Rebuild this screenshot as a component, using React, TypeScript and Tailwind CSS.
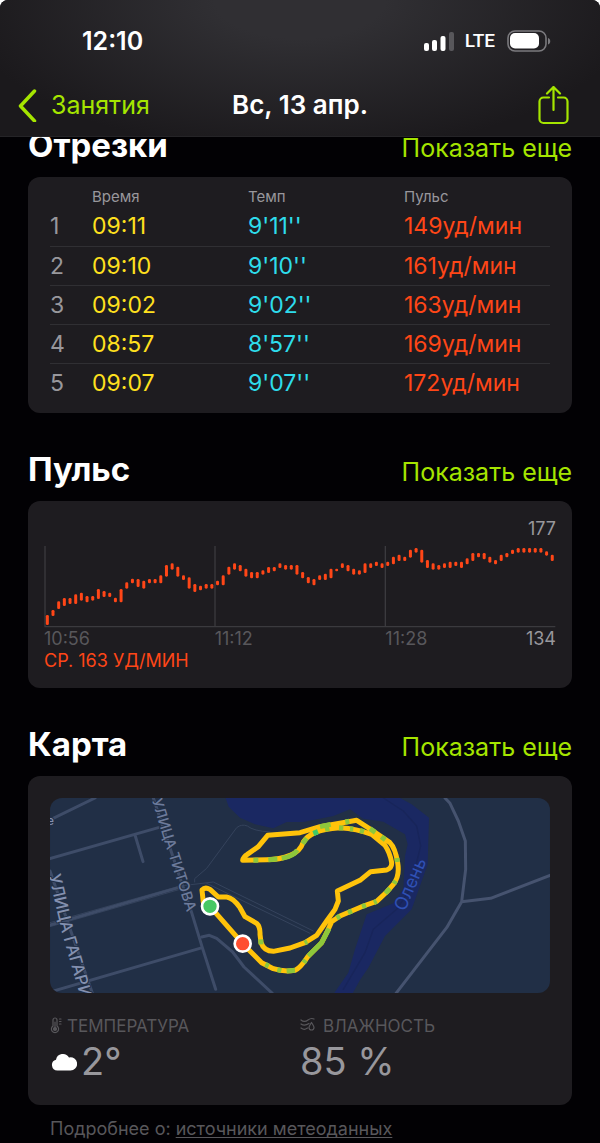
import type { ReactNode } from "react";

const splits = [
  { id: 1, time: "09:11", pace: "9'11''", pulse: 149 },
  { id: 2, time: "09:10", pace: "9'10''", pulse: 161 },
  { id: 3, time: "09:02", pace: "9'02''", pulse: 163 },
  { id: 4, time: "08:57", pace: "8'57''", pulse: 169 },
  { id: 5, time: "09:07", pace: "9'07''", pulse: 172 },
];

// [top, bottom] of every bar, in chart units
const pulseBars = [
  [345, 375], [330, 348], [304, 327], [294, 318], [294, 312], [283, 312],
  [278, 302], [288, 307], [288, 302], [267, 297], [273, 291], [278, 291],
  [293, 307], [267, 307], [247, 266], [236, 250], [237, 261], [242, 266],
  [237, 250], [237, 250], [226, 250], [195, 230], [190, 209], [200, 230],
  [226, 240], [232, 266], [252, 276], [257, 271], [252, 266], [252, 266],
  [242, 256], [226, 256], [200, 224], [190, 209], [195, 214], [206, 230],
  [216, 235], [216, 235], [211, 224], [201, 219], [201, 214], [190, 204],
  [195, 209], [195, 209], [195, 224], [216, 235], [231, 250], [237, 256],
  [226, 240], [221, 240], [206, 235], [206, 214], [190, 204], [195, 214],
  [206, 224], [211, 224], [190, 219], [190, 204], [185, 198], [190, 204],
  [185, 198], [170, 193], [164, 183], [170, 183], [149, 173], [144, 158],
  [149, 188], [180, 204], [190, 209], [195, 209], [190, 204], [185, 204],
  [185, 198], [185, 204], [175, 193], [159, 183], [159, 172], [159, 178],
  [170, 188], [180, 193], [164, 183], [159, 172], [149, 162], [144, 158],
  [144, 158], [144, 158], [144, 158], [144, 158], [154, 167], [164, 183],
];

function StatusBar() {
  return (
    <div className="flex h-[82px] items-center justify-between pl-[82px] pr-[49px]">
      <span className="text-[25px] font-semibold leading-8">12:10</span>
      <div className="flex items-center">
        <svg className="h-5 w-[31px]" viewBox="0 0 31 20" fill="#fff">
          <rect x="0" y="12" width="5" height="8" rx="2" />
          <rect x="8" y="9" width="5" height="11" rx="2" />
          <rect x="16.500" y="5" width="5" height="15" rx="2" />
          <rect x="25" y="1" width="5" height="19" rx="2" fill="#58575b" />
        </svg>
        <span className="ml-2.5 font-[Roboto,sans-serif] text-[19px] font-medium leading-6">LTE</span>
        <svg className="ml-3 h-[22px] w-11" viewBox="0 0 44 22">
          <rect x="1" y="1" width="38" height="20" rx="7" fill="none" stroke="#7b7a7e" strokeWidth="1.6" />
          <rect x="3" y="3" width="29" height="15.500" rx="5" fill="#fff" />
          <path d="M41 8c3 1 3 5.500 0 6.500z" fill="#7b7a7e" />
        </svg>
      </div>
    </div>
  );
}

function NavBar() {
  return (
    <nav className="grid h-[54px] grid-cols-[1fr_auto_1fr] items-start px-[18px] pt-1">
      <a href="#workouts" className="flex items-center gap-3.5 text-[#a5e500]">
        <svg className="h-[34px] w-[19px]" viewBox="0 0 19 34" fill="none" stroke="currentColor" strokeWidth="3.500" strokeLinecap="round" strokeLinejoin="round">
          <path d="M16.500 3 2.500 18l14 15" />
        </svg>
        <span className="text-[25px] leading-[38px]">Занятия</span>
      </a>
      <h1 className="text-[26px] font-semibold leading-[38px]">Вс, 13 апр.</h1>
      <button type="button" aria-label="Поделиться" className="mr-[13px] justify-self-end text-[#a5e500]">
        <svg className="h-10 w-[31px]" viewBox="0 0 31 40" fill="none" stroke="currentColor" strokeWidth="2.200" strokeLinecap="round" strokeLinejoin="round">
          <path d="M11 11.500H5.500a4 4 0 0 0-4 4V33a4 4 0 0 0 4 4h20a4 4 0 0 0 4-4V15.500a4 4 0 0 0-4-4H20M15.500 24V1M9 7.500 15.500 1 22 7.500" />
        </svg>
      </button>
    </nav>
  );
}

function Section({ title, children }: { title: string; children: ReactNode }) {
  return (
    <section>
      <div className="flex h-16 items-baseline justify-between pt-3">
        <h2 className="text-[33px] font-bold leading-10">{title}</h2>
        <a href="#more" className="text-[25px] leading-8 text-[#a5e500]">
          Показать еще
        </a>
      </div>
      <div className="rounded-xl bg-[#1e1c20]">{children}</div>
    </section>
  );
}

function SplitsTable() {
  return (
    <div className="px-[22px] pb-[11px] pt-2.5">
      <table className="w-full table-fixed text-left">
        <thead>
          <tr className="h-5 text-[15px] leading-5 text-[#98979c]">
            <th className="w-[42px] p-0" aria-label="Номер"></th>
            <th className="w-[156px] p-0 font-normal">Время</th>
            <th className="w-[156px] p-0 font-normal">Темп</th>
            <th className="p-0 font-normal">Пульс</th>
          </tr>
        </thead>
        <tbody className="divide-y divide-[#302f33]">
          {splits.map((split) => (
            <tr key={split.id} className="h-[39px] text-[23px] leading-8">
              <td className="p-0 text-[#98979c]">{split.id}</td>
              <td className="p-0 text-[#ffe01e]">{split.time}</td>
              <td className="p-0 text-[#2edcec]">{split.pace}</td>
              <td className="p-0 text-[#ff4617]">{split.pulse}уд/мин</td>
            </tr>
          ))}
        </tbody>
      </table>
    </div>
  );
}

function PulseChart() {
  return (
    <div className="px-4 pb-4 pt-4">
      <p className="text-right text-lg leading-6 text-[#98979c]">177</p>
      <svg className="mt-1 block w-full" viewBox="72 135 1536 249">
        <path d="M75 138V380H1606M585 138V380M1096 138V380" fill="none" stroke="#3b3a3e" strokeWidth="4" />
        {pulseBars.map(([top, bottom], i) => (
          <rect key={i} x={77.5 + i * 17.02} y={top} width="9" height={bottom - top} rx="4" fill="#ff4617" />
        ))}
      </svg>
      <div className="grid grid-cols-3 text-lg leading-[22px] text-[#58575b]">
        <span>10:56</span>
        <span>11:12</span>
        <span className="flex justify-between">
          11:28 <span className="text-[#98979c]">134</span>
        </span>
      </div>
      <p className="text-lg leading-[22px] text-[#ff4617]">СР. 163 УД/МИН</p>
    </div>
  );
}

function RouteMap() {
  return (
    <svg
      className="block w-full rounded-xl"
      viewBox="30 26 1500 586"
      fill="none"
      strokeLinecap="round"
      strokeLinejoin="round"
      fontFamily="Inter, sans-serif"
    >
      <rect x="30" y="26" width="1500" height="586" fill="#212f46" />

      {/* River */}
      <path
        d="M557 26 566 52 600 85 645 105 700 117 740 98H790L880 80 930 60 970 88 1030 97 1095 135 1103 165 1095 200 1090 300 1060 342 980 375 945 480 925 550 882 612H938L960 572 985 535 1035 440 1115 360 1163 225 1167 85 1115 45 1080 26Z"
        fill="#1a2862"
      />
      <path d="M1030 26 1090 65 1130 110 1142 170 1110 300 1070 360 1000 420 975 490 910 600" stroke="#18255a" strokeWidth="4" />

      {/* Paths */}
      <g stroke="#35435c" strokeWidth="3">
        <path d="M30 400 420 290 520 278 820 425" />
        <path d="M30 412 420 300M500 282 810 432M464 278V268L500 237 590 115Q605 103 622 110 640 125 690 128" />
      </g>

      {/* Streets */}
      <g stroke="#3e4c68" strokeWidth="9">
        <path d="M30 92 165 26M30 208 355 115M285 137 309 217M30 407 415 295M30 608 487 475M340 26 455 370 487 475 527 600M30 245 160 620" />
        <path d="M485 443 508 438 530 447 578 488 612 533 697 612" />
        <path d="M1215 26 1230 42 1255 95 1276 155 1277 240 1265 337 1220 415 1068 612M1265 337 1352 327 1530 258" stroke="#46536f" />
      </g>

      <path id="titova" d="M335 32 368 140 460 430" />
      <path id="gagarina" d="M26 258 66 430 140 690" />
      <g fill="#6d7b9b" stroke="#212f46" strokeWidth="6" paintOrder="stroke" fontWeight="500">
        <text fontSize="44">
          <textPath href="#titova">УЛИЦА ТИТОВА</textPath>
        </text>
        <text fontSize="50" fill="#8390af">
          <textPath href="#gagarina">УЛИЦА ГАГАРИ</textPath>
        </text>
        <text x="22" y="106" fontSize="34" fill="#8390af">
          е
        </text>
      </g>
      <text transform="translate(1095 368) rotate(-67)" fontSize="54" fill="#2f50b4">
        Олень
      </text>

      {/* Route */}
      <g transform="translate(450 60)" strokeWidth="15">
        <path
          d="M60 291 40 280 36 242Q45 232 60 240L85 263H110Q130 266 150 295L165 322 200 342Q211 352 210 375L213 400Q222 426 250 426L300 416 345 400 380 378 410 335 435 300 445 275 442 245 510 213 542 187 590 182Q606 176 605 160 600 130 585 108L545 75Q500 58 450 55 400 58 375 70 352 80 340 98 330 128 300 138 270 151 230 151L158 153Q160 142 172 135L205 112 233 78 330 70 390 52 500 33 545 62 600 100Q616 116 623 160 630 200 610 225L590 248 560 276 520 290 450 320 425 337 410 370 395 400 355 440Q330 478 315 483 280 488 250 478L215 460 158 403Z"
          stroke="#ffc30a"
        />
        <path
          d="M190 153H205M235 151 262 149M275 147Q310 142 322 122M338 103 350 87M372 71 382 68M405 60 418 57M447 55 460 56M480 58 490 59M510 63 522 67M390 52 422 45M466 38 478 36M540 58 556 69M574 82 586 91M621 146 622 158M617 214 612 223M600 237 586 252M560 276 552 280M528 288 516 292M486 305 474 310M450 320 440 326M417 358 395 400 355 440M347 452 341 460M315 483 290 485M274 484 262 481M236 470 226 465M212 390 213 405M344 401 352 397"
          stroke="#8dc73b"
          strokeLinecap="butt"
        />
        <path d="M370 73 384 67" stroke="#3fca67" strokeLinecap="butt" />
        <circle cx="60" cy="291" r="24" fill="#46c864" stroke="#fff" strokeWidth="8" />
        <circle cx="158" cy="403" r="24" fill="#ff4e30" stroke="#fff" strokeWidth="8" />
      </g>
    </svg>
  );
}

function Weather() {
  return (
    <dl className="grid grid-cols-2 text-[#98979c]">
      <div>
        <dt className="flex items-center gap-1 text-[17px] leading-[26px] text-[#58575b]">
          <svg className="h-[18px] w-[13px]" viewBox="0 0 13 18" fill="none" stroke="currentColor" strokeWidth="1.200" strokeLinecap="round">
            <path d="M3 9V3a2 2 0 0 1 4 0V9a3.600 3.600 0 1 1-4 0ZM5 5v7" />
            <circle cx="5" cy="12" r="1.500" fill="currentColor" />
            <path d="M9.500 2h1.500M9.500 4.500h1.500M9.500 7h1.500" />
          </svg>
          ТЕМПЕРАТУРА
        </dt>
        <dd className="flex items-center gap-1 text-[38px] leading-[44px]">
          <svg className="h-[19px] w-[27px]" viewBox="0 0 27 19" fill="#fff">
            <path d="M7.500 18.500a5.500 5.500 0 0 1-1.500-10.800A7 7 0 0 1 19 5.500a6.600 6.600 0 1 1 1 13z" />
          </svg>
          2°
        </dd>
      </div>
      <div>
        <dt className="flex items-center gap-2 text-[17px] leading-[26px] text-[#58575b]">
          <svg className="h-[18px] w-[15px]" viewBox="0 0 15 18" fill="none" stroke="currentColor" strokeWidth="1.200" strokeLinecap="round" strokeLinejoin="round">
            <path d="M1 3c3 2.500 5 1.500 7 0s4-2 6-1M1 7c3 2 5 1.500 8-.500M1 11c3 2 4 1.500 6.500 0M11.500 5.500c1.500 2.500 2.500 3.500 2.500 5a2.500 2.500 0 0 1-5 0c0-1.500 1-2.500 2.500-5z" />
          </svg>
          ВЛАЖНОСТЬ
        </dt>
        <dd className="text-[38px] leading-[44px]">85 %</dd>
      </div>
    </dl>
  );
}

export default function App() {
  return (
    <div className="bg-white font-[Inter,sans-serif] text-white">
      <div className="rounded-t-lg bg-[#020104]">
        <header className="sticky top-0 z-10 rounded-t-lg border-b border-[#252427] bg-radial-[ellipse_at_top] from-[#302f33] from-20% to-[#1b191c] to-80%">
          <StatusBar />
          <NavBar />
        </header>

        {/* The first heading is scrolled halfway under the header */}
        <main className="-mt-6 flex flex-col gap-6 px-7">
          <Section title="Отрезки">
            <SplitsTable />
          </Section>
          <Section title="Пульс">
            <PulseChart />
          </Section>
          <Section title="Карта">
            <div className="flex flex-col gap-5 px-[22px] pb-[22px] pt-[22px]">
              <RouteMap />
              <Weather />
            </div>
          </Section>
        </main>

        <footer className="px-[50px] pt-2.5 text-lg leading-7 text-[#58575b]">
          Подробнее о:{" "}
          <a href="#weather" className="underline underline-offset-2">
            источники метеоданных
          </a>
        </footer>
      </div>
    </div>
  );
}
